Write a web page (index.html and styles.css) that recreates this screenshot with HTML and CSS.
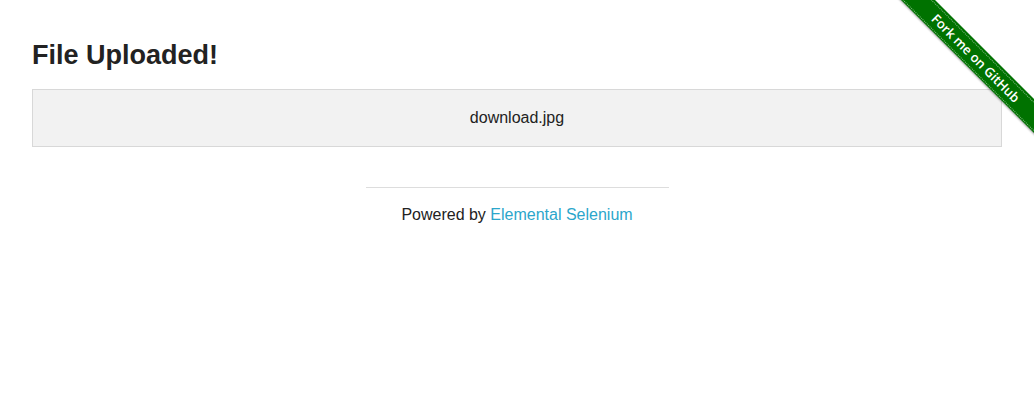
FILE: index.html
```html
<!DOCTYPE html>
<html>
<head>
<meta charset="utf-8">
<title>The Internet</title>
<link rel="stylesheet" href="styles.css">
</head>
<body>
<a class="fork" href="#"><span class="band"><span class="stitch">Fork me on GitHub</span></span></a>
<div class="row">
  <div class="example">
    <h3 class="title">File Uploaded!</h3>
    <div class="panel">download.jpg</div>
  </div>
</div>
<div class="footer-row">
  <div class="footer">
    <hr class="rule">
    <div class="powered">Powered by <a class="link" href="#">Elemental Selenium</a></div>
  </div>
</div>
</body>
</html>
```

FILE: styles.css
```css
html, body {
  margin: 0;
  padding: 0;
  background: #fff;
  font-family: "Liberation Sans", Arial, sans-serif;
  color: #222;
}

.row {
  max-width: 1000px;
  margin: 0 auto;
}

.example {
  padding: 0 15px;
}

.title {
  margin: 0;
  padding-top: 39px;
  font-size: 27px;
  line-height: 32px;
  font-weight: bold;
  color: #222;
}

.panel {
  margin-top: 18px;
  background: #f2f2f2;
  border: 1px solid #d8d8d8;
  padding: 20px;
  font-size: 16px;
  line-height: 16px;
  text-align: center;
  color: #222;
}

.footer-row {
  display: flex;
  justify-content: center;
}

.footer {
  width: 303px;
  padding-top: 40px;
  text-align: center;
}

.rule {
  margin: 0;
  border: 0;
  border-top: 1px solid #ddd;
  height: 0;
}

.powered {
  margin-top: 15px;
  font-size: 16px;
  line-height: 24px;
}

.link {
  color: #2ba6cb;
  text-decoration: none;
}

.fork {
  position: absolute;
  top: 0;
  right: 0;
  width: 149px;
  height: 149px;
  overflow: hidden;
  text-decoration: none;
}

.band {
  position: absolute;
  left: -39px;
  top: 46px;
  width: 260px;
  height: 24px;
  background: #007200;
  transform: rotate(45deg);
  box-shadow: 0 1px 2px rgba(0,0,0,0.35);
  display: flex;
  align-items: center;
}

.stitch {
  flex: 1;
  height: 19px;
  border-top: 1px dotted rgba(255,255,255,0.5);
  border-bottom: 1px dotted rgba(255,255,255,0.5);
  color: #fff;
  font-family: "Open Sans", sans-serif;
  font-weight: 600;
  font-size: 13px;
  line-height: 19px;
  text-align: center;
  box-sizing: content-box;
}
```
